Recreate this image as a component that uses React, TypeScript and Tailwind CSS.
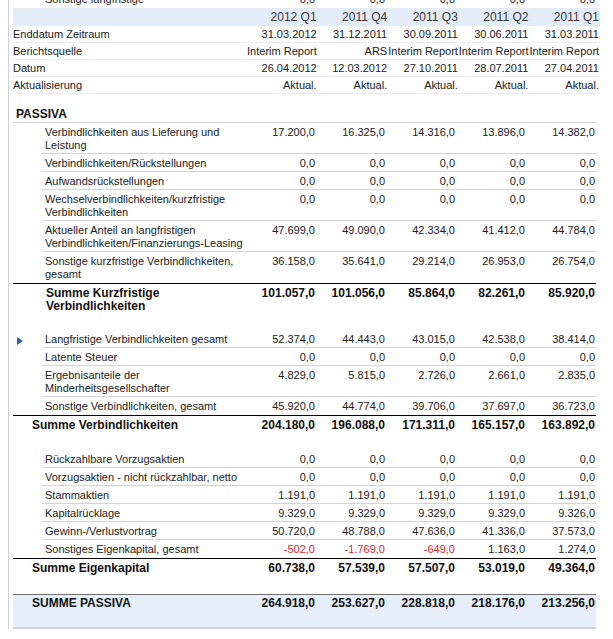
type Row = { label: string[]; values: string[]; marker?: boolean };

const zeros = ["0,0", "0,0", "0,0", "0,0", "0,0"];

const quarters = ["2012 Q1", "2011 Q4", "2011 Q3", "2011 Q2", "2011 Q1"];

const meta = [
  { label: "Enddatum Zeitraum", values: ["31.03.2012", "31.12.2011", "30.09.2011", "30.06.2011", "31.03.2011"] },
  { label: "Berichtsquelle", values: ["Interim Report", "ARS", "Interim Report", "Interim Report", "Interim Report"] },
  { label: "Datum", values: ["26.04.2012", "12.03.2012", "27.10.2011", "28.07.2011", "27.04.2011"] },
  { label: "Aktualisierung", values: ["Aktual.", "Aktual.", "Aktual.", "Aktual.", "Aktual."] },
];

const kurzfristig: Row[] = [
  { label: ["Verbindlichkeiten aus Lieferung und", "Leistung"], values: ["17.200,0", "16.325,0", "14.316,0", "13.896,0", "14.382,0"] },
  { label: ["Verbindlichkeiten/Rückstellungen"], values: zeros },
  { label: ["Aufwandsrückstellungen"], values: zeros },
  { label: ["Wechselverbindlichkeiten/kurzfristige", "Verbindlichkeiten"], values: zeros },
  { label: ["Aktueller Anteil an langfristigen", "Verbindlichkeiten/Finanzierungs-Leasing"], values: ["47.699,0", "49.090,0", "42.334,0", "41.412,0", "44.784,0"] },
  { label: ["Sonstige kurzfristige Verbindlichkeiten,", "gesamt"], values: ["36.158,0", "35.641,0", "29.214,0", "26.953,0", "26.754,0"] },
];

const verbindlichkeiten: Row[] = [
  { label: ["Langfristige Verbindlichkeiten gesamt"], values: ["52.374,0", "44.443,0", "43.015,0", "42.538,0", "38.414,0"], marker: true },
  { label: ["Latente Steuer"], values: zeros },
  { label: ["Ergebnisanteile der", "Minderheitsgesellschafter"], values: ["4.829,0", "5.815,0", "2.726,0", "2.661,0", "2.835,0"] },
  { label: ["Sonstige Verbindlichkeiten, gesamt"], values: ["45.920,0", "44.774,0", "39.706,0", "37.697,0", "36.723,0"] },
];

const eigenkapital: Row[] = [
  { label: ["Rückzahlbare Vorzugsaktien"], values: zeros },
  { label: ["Vorzugsaktien - nicht rückzahlbar, netto"], values: zeros },
  { label: ["Stammaktien"], values: ["1.191,0", "1.191,0", "1.191,0", "1.191,0", "1.191,0"] },
  { label: ["Kapitalrücklage"], values: ["9.329,0", "9.329,0", "9.329,0", "9.329,0", "9.326,0"] },
  { label: ["Gewinn-/Verlustvortrag"], values: ["50.720,0", "48.788,0", "47.636,0", "41.336,0", "37.573,0"] },
  { label: ["Sonstiges Eigenkapital, gesamt"], values: ["-502,0", "-1.769,0", "-649,0", "1.163,0", "1.274,0"] },
];

function Values({ values }: { values: string[] }) {
  return (
    <>
      {values.map((v, i) => (
        <div key={i} className={`w-[70px] shrink-0 pr-[1px] text-right whitespace-nowrap ${v.startsWith("-") ? "text-[#e3262b]" : ""}`}>
          {v}
        </div>
      ))}
    </>
  );
}

function ItemRow({ row, last }: { row: Row; last?: boolean }) {
  return (
    <div className="flex">
      <div className="w-[29px] shrink-0 pl-[4px] pt-[7px]">
        {row.marker && (
          <svg width="6" height="8" viewBox="0 0 6 8">
            <polygon points="0,0 6,4 0,8" fill="#2a62ad" />
          </svg>
        )}
      </div>
      <div className={`flex flex-1 pt-[3px] leading-[13px] ${last ? "pb-[2px]" : "pb-[1px] border-b border-[#d4d4d4]"}`}>
        <div className="flex-1 pl-[3px]">
          {row.label.map((l) => (
            <div key={l} className="whitespace-nowrap">{l}</div>
          ))}
        </div>
        <Values values={row.values} />
      </div>
    </div>
  );
}

function SumRow({ label, values, indent }: { label: string[]; values: string[]; indent: string }) {
  return (
    <div className="flex border-t border-black pt-[3px] pb-[1px] leading-[13px] font-bold text-[12px] text-[#111]">
      <div className={`flex-1 ${indent}`}>
        {label.map((l) => (
          <div key={l} className="whitespace-nowrap">{l}</div>
        ))}
      </div>
      <Values values={values} />
    </div>
  );
}

export default function App() {
  return (
    <div className="w-[613px] h-[639px] overflow-hidden bg-white font-['Liberation_Sans',Arial,sans-serif] text-[11px] text-[#222]">
      <div className="ml-[8px] h-full border-l border-[#c9d1dc] pl-[4px]">
        <div className="w-[587px]">
          {/* row scrolled partly out of view */}
          <div className="-mt-[10px] h-[18px] mr-[4px] flex">
            <div className="w-[29px] shrink-0" />
            <div className="flex flex-1 pt-[3px] leading-[13px]">
              <div className="flex-1 pl-[3px] whitespace-nowrap">Sonstige langfristige</div>
              <Values values={zeros} />
            </div>
          </div>

          {/* header band */}
          <div className="h-[18px] flex items-center bg-[#e4ecf7] text-[12px] text-[#3a3a3a]">
            <div className="flex-1" />
            {quarters.map((q) => (
              <div key={q} className="w-[70.6px] pr-[1px] text-right">{q}</div>
            ))}
          </div>

          {meta.map((m) => (
            <div key={m.label} className="h-[17px] flex items-center border-b border-[#ececec]">
              <div className="flex-1 whitespace-nowrap">{m.label}</div>
              {m.values.map((v, i) => (
                <div key={i} className="w-[70.6px] pr-[1px] text-right whitespace-nowrap">{v}</div>
              ))}
            </div>
          ))}

          <div className="mr-[4px] mt-[12px]">
            <div className="h-[17px] flex items-center border-b border-[#d4d4d4] pl-[3px] font-bold text-[12px] text-[#111]">
              PASSIVA
            </div>
            {kurzfristig.map((r, i) => (
              <ItemRow key={i} row={r} last={i === kurzfristig.length - 1} />
            ))}
            <SumRow
              label={["Summe Kurzfristige", "Verbindlichkeiten"]}
              values={["101.057,0", "101.056,0", "85.864,0", "82.261,0", "85.920,0"]}
              indent="pl-[33px]"
            />

            <div className="h-[16px]" />
            {verbindlichkeiten.map((r, i) => (
              <ItemRow key={i} row={r} last={i === verbindlichkeiten.length - 1} />
            ))}
            <SumRow
              label={["Summe Verbindlichkeiten"]}
              values={["204.180,0", "196.088,0", "171.311,0", "165.157,0", "163.892,0"]}
              indent="pl-[19px]"
            />

            <div className="h-[17px]" />
            {eigenkapital.map((r, i) => (
              <ItemRow key={i} row={r} last={i === eigenkapital.length - 1} />
            ))}
            <SumRow
              label={["Summe Eigenkapital"]}
              values={["60.738,0", "57.539,0", "57.507,0", "53.019,0", "49.364,0"]}
              indent="pl-[19px]"
            />

            <div className="h-[18px]" />
            <div className="h-[35px] flex border-t border-[#6f6f6f] border-b-2 border-b-[#cfd3d8] bg-[#e6eef9] pt-[2px] leading-[13px] font-bold text-[12px] text-[#111]">
              <div className="flex-1 pl-[19px]">SUMME PASSIVA</div>
              <Values values={["264.918,0", "253.627,0", "228.818,0", "218.176,0", "213.256,0"]} />
            </div>
          </div>
        </div>
      </div>
    </div>
  );
}
